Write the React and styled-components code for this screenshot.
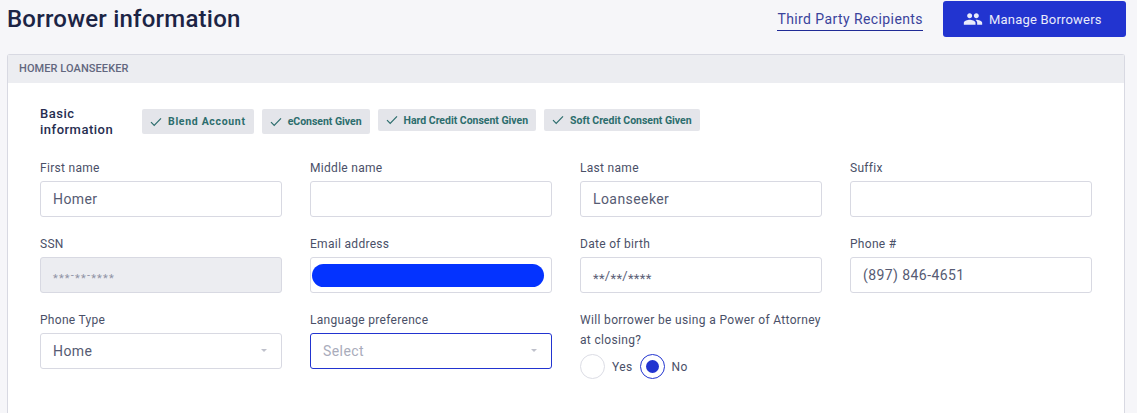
import React from 'react';
import styled, { createGlobalStyle } from 'styled-components';

const GlobalStyle = createGlobalStyle`
  html, body {
    margin: 0;
    padding: 0;
    background: #fff;
  }
  body {
    font-family: Roboto, "Liberation Sans", sans-serif;
    overflow: hidden;
  }
`;

const Page = styled.div`
  width: 1137px;
  height: 413px;
  background: #f6f6f9;
  padding: 0 12px 0 7px;
  box-sizing: border-box;
  overflow: hidden;
`;

const TopBar = styled.header`
  display: flex;
  align-items: flex-start;
  height: 54px;
`;

const Title = styled.h1`
  margin: 3px auto 0 0;
  font-size: 24px;
  line-height: 32px;
  font-weight: 500;
  letter-spacing: 0.22px;
  color: #1c2445;
`;

const TextLink = styled.a`
  margin: 10px 20px 0 0;
  height: 20px;
  font-size: 14px;
  line-height: 18px;
  letter-spacing: 0.41px;
  color: #3a439c;
  border-bottom: 1px solid #1f2a96;
`;

const PrimaryButton = styled.button`
  display: flex;
  align-items: center;
  gap: 6px;
  width: 183px;
  height: 36px;
  margin: 1px -1px 0 0;
  padding: 0 0 0 20px;
  border: 0;
  border-radius: 3px;
  background: #2234d0;
  color: #e9ebfb;
  font: 400 13px Roboto, sans-serif;
  letter-spacing: 0.2px;
`;

const Panel = styled.section`
  height: 359px;
  background: #fff;
  border: 1px solid #d8d9e2;
  border-bottom: 0;
  border-radius: 3px 3px 0 0;
`;

const PanelHeader = styled.div`
  height: 28px;
  padding-left: 11px;
  background: #ecedf1;
  font-size: 11px;
  line-height: 27px;
  font-weight: 500;
  letter-spacing: 0.08px;
  color: #62677e;
`;

const PanelBody = styled.div`
  padding: 23px 32px 0;
`;

const InfoRow = styled.div`
  display: flex;
  align-items: flex-start;
  gap: 8px;
  height: 52px;
`;

const SectionLabel = styled.h2`
  width: 94px;
  margin: 0;
  font-size: 13px;
  line-height: 16px;
  font-weight: 500;
  letter-spacing: 0.5px;
  color: #262d50;
`;

const Badge = styled.span`
  display: flex;
  align-items: center;
  gap: 6px;
  height: ${({ $tall }) => ($tall ? 25 : 22)}px;
  margin-top: 3px;
  padding: 0 8px;
  box-sizing: border-box;
  background: #e4e5ea;
  border-radius: 2px;
  font-size: 10.5px;
  font-weight: 700;
  letter-spacing: ${({ $spaced }) => ($spaced ? '0.68px' : '-0.02px')};
  color: #2c6d6d;
  white-space: nowrap;
`;

const FormGrid = styled.div`
  display: grid;
  grid-template-columns: repeat(4, 242px);
  column-gap: 28px;
  row-gap: 17px;
`;

const Field = styled.div`
  min-width: 0;
`;

const FieldLabel = styled.label`
  display: block;
  height: 20px;
  margin-bottom: 3px;
  font-size: 12px;
  line-height: 20px;
  letter-spacing: 0.3px;
  color: #4a5068;
  white-space: nowrap;
`;

const InputBox = styled.div`
  display: flex;
  align-items: center;
  justify-content: space-between;
  height: 36px;
  padding: 0 14px 0 12px;
  box-sizing: border-box;
  background: ${({ $disabled }) => ($disabled ? '#ecedf1' : '#fff')};
  border: 1px solid ${({ $focused }) => ($focused ? '#2234d0' : '#d8d9e2')};
  border-radius: 3px;
  font-size: 14px;
  letter-spacing: 0.42px;
  color: ${({ $muted }) => ($muted ? '#a9acbb' : '#565b73')};
`;

const MaskedText = styled.span`
  font-size: ${({ $small }) => ($small ? 11 : 13)}px;
  letter-spacing: ${({ $small }) => ($small ? '1.2px' : '0.3px')};
  color: ${({ $small }) => ($small ? '#8f93a5' : '#5c6178')};
`;

// the asterisks sit mid-height in the reference, lower than Roboto draws them
const Stars = styled.span`
  position: relative;
  top: 3px;
`;

const RedactedBox = styled(InputBox)`
  padding: 0 7px 0 1px;
`;

const Redaction = styled.div`
  width: 232px;
  height: 23px;
  border-radius: 12px;
  background: #0433ff;
`;

const Caret = styled.span`
  width: 0;
  height: 0;
  margin-top: -2px;
  border-left: 3.5px solid transparent;
  border-right: 3.5px solid transparent;
  border-top: 3.5px solid #bfc1cc;
`;

const QuestionLabel = styled.label`
  display: block;
  width: 250px;
  font-size: 12px;
  line-height: 20px;
  letter-spacing: 0.34px;
  color: #4a5068;
`;

const RadioRow = styled.div`
  display: flex;
  align-items: center;
  margin-top: 4px;
`;

const RadioCircle = styled.span`
  display: flex;
  align-items: center;
  justify-content: center;
  width: 25px;
  height: 25px;
  box-sizing: border-box;
  border-radius: 50%;
  background: #fff;
  border: ${({ $checked }) => ($checked ? '1px solid #2234d0' : '1px solid #dcdde5')};

  &::after {
    content: '';
    display: ${({ $checked }) => ($checked ? 'block' : 'none')};
    width: 13px;
    height: 13px;
    border-radius: 50%;
    background: #2234d0;
  }
`;

const RadioText = styled.span`
  margin: 0 7px 0 7px;
  font-size: 12px;
  letter-spacing: 0.4px;
  color: #4a5068;
`;

const CheckIcon = () => (
  <svg width="12" height="10" viewBox="0 0 12 10" fill="none" stroke="#2c6d6d" strokeWidth="1.2">
    <path d="M1 5.2 L4.2 8.4 L11 1.4" />
  </svg>
);

const PeopleIcon = () => (
  <svg width="20" height="20" viewBox="0 0 24 24" fill="#e9ebfb">
    <path d="M16 11c1.66 0 2.99-1.34 2.99-3S17.66 5 16 5s-3 1.34-3 3 1.34 3 3 3zm-8 0c1.66 0 2.99-1.34 2.99-3S9.66 5 8 5 5 6.34 5 8s1.34 3 3 3zm0 2c-2.33 0-7 1.17-7 3.5V19h14v-2.5c0-2.33-4.67-3.5-7-3.5zm8 0c-.29 0-.62.02-.97.05 1.16.84 1.97 1.97 1.97 3.45V19h6v-2.5c0-2.33-4.67-3.5-7-3.5z" />
  </svg>
);

const badges = [
  { text: 'Blend Account', tall: true, spaced: true },
  { text: 'eConsent Given', tall: true },
  { text: 'Hard Credit Consent Given' },
  { text: 'Soft Credit Consent Given' },
];

const App = () => (
  <>
    <GlobalStyle />
    <Page>
      <TopBar>
        <Title>Borrower information</Title>
        <TextLink>Third Party Recipients</TextLink>
        <PrimaryButton>
          <PeopleIcon />
          Manage Borrowers
        </PrimaryButton>
      </TopBar>
      <Panel>
        <PanelHeader>HOMER LOANSEEKER</PanelHeader>
        <PanelBody>
          <InfoRow>
            <SectionLabel>Basic information</SectionLabel>
            {badges.map((b) => (
              <Badge key={b.text} $tall={b.tall} $spaced={b.spaced}>
                <CheckIcon />
                {b.text}
              </Badge>
            ))}
          </InfoRow>
          <FormGrid>
            <Field>
              <FieldLabel>First name</FieldLabel>
              <InputBox>Homer</InputBox>
            </Field>
            <Field>
              <FieldLabel>Middle name</FieldLabel>
              <InputBox />
            </Field>
            <Field>
              <FieldLabel>Last name</FieldLabel>
              <InputBox>Loanseeker</InputBox>
            </Field>
            <Field>
              <FieldLabel>Suffix</FieldLabel>
              <InputBox />
            </Field>
            <Field>
              <FieldLabel>SSN</FieldLabel>
              <InputBox $disabled>
                <MaskedText $small>
                  <Stars>***</Stars>-<Stars>**</Stars>-<Stars>****</Stars>
                </MaskedText>
              </InputBox>
            </Field>
            <Field>
              <FieldLabel>Email address</FieldLabel>
              <RedactedBox>
                <Redaction />
              </RedactedBox>
            </Field>
            <Field>
              <FieldLabel>Date of birth</FieldLabel>
              <InputBox>
                <MaskedText>
                  <Stars>**</Stars>/<Stars>**</Stars>/<Stars>****</Stars>
                </MaskedText>
              </InputBox>
            </Field>
            <Field>
              <FieldLabel>Phone #</FieldLabel>
              <InputBox>(897) 846-4651</InputBox>
            </Field>
            <Field>
              <FieldLabel>Phone Type</FieldLabel>
              <InputBox>
                Home
                <Caret />
              </InputBox>
            </Field>
            <Field>
              <FieldLabel>Language preference</FieldLabel>
              <InputBox $focused $muted>
                Select
                <Caret />
              </InputBox>
            </Field>
            <Field>
              <QuestionLabel>Will borrower be using a Power of Attorney at closing?</QuestionLabel>
              <RadioRow>
                <RadioCircle />
                <RadioText>Yes</RadioText>
                <RadioCircle $checked />
                <RadioText>No</RadioText>
              </RadioRow>
            </Field>
          </FormGrid>
        </PanelBody>
      </Panel>
    </Page>
  </>
);

export default App;
